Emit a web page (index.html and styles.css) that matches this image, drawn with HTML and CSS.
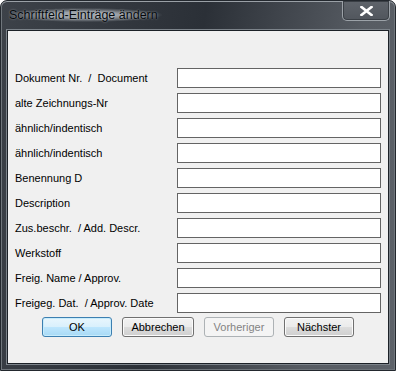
FILE: index.html
```html
<!DOCTYPE html>
<html lang="de">
<head>
  <meta charset="UTF-8" />
  <title>Schriftfeld-Einträge ändern</title>
  <link rel="stylesheet" href="styles.css">
</head>
<body>
  <div class="window">
    <div class="title-bar">
      <span class="title">Schriftfeld-Einträge ändern</span>
      <button class="close-btn" type="button">
        <svg width="13" height="10" viewBox="0 0 13 10">
          <path d="M1.5 1 L11.5 9 M11.5 1 L1.5 9" stroke="#fff" stroke-width="2.6" stroke-linecap="square"/>
        </svg>
      </button>
    </div>

    <!-- CLIENT AREA -->
    <div class="client">
      <form class="fields">
        <label class="field-label">Dokument Nr.  /  Document</label>
        <input type="text" class="field-input">
        <label class="field-label">alte Zeichnungs-Nr</label>
        <input type="text" class="field-input">
        <label class="field-label">ähnlich/indentisch</label>
        <input type="text" class="field-input">
        <label class="field-label">ähnlich/indentisch</label>
        <input type="text" class="field-input">
        <label class="field-label">Benennung D</label>
        <input type="text" class="field-input">
        <label class="field-label">Description</label>
        <input type="text" class="field-input">
        <label class="field-label">Zus.beschr.  / Add. Descr.</label>
        <input type="text" class="field-input">
        <label class="field-label">Werkstoff</label>
        <input type="text" class="field-input">
        <label class="field-label">Freig. Name / Approv.</label>
        <input type="text" class="field-input">
        <label class="field-label">Freigeg. Dat.  / Approv. Date</label>
        <input type="text" class="field-input">
      </form>

      <div class="buttons">
        <button type="button" class="btn btn-default">OK</button>
        <button type="button" class="btn btn-wide">Abbrechen</button>
        <button type="button" class="btn" disabled>Vorheriger</button>
        <button type="button" class="btn">Nächster</button>
      </div>
    </div>
  </div>
</body>
</html>
```

FILE: styles.css
```css
body {
  margin: 0;
  background: #ffffff;
  font-family: "Liberation Sans", Arial, sans-serif;
}

.window {
  width: 396px;
  height: 371px;
  box-sizing: border-box;
  border: 1px solid #23282e;
  border-radius: 7px 7px 0 0;
  background: linear-gradient(100deg, #3d4249 0%, #2b3037 45%, #575c63 80%, #5d6269 100%);
  box-shadow: inset 0 1px 0 #9aa0a6, inset 1px 0 0 #70767c, inset -1px 0 0 #70767c, inset 0 -1px 0 #6d7379;
  display: flex;
  flex-direction: column;
  padding: 0 6px 6px 6px;
}

.title-bar {
  height: 28px;
  display: flex;
  align-items: flex-start;
  justify-content: space-between;
}

.title {
  font-family: "Liberation Sans", Arial, sans-serif;
  font-size: 12.5px;
  color: #05090d;
  margin: 7px 0 0 1px;
  padding: 0 4px 0 1px;
  background: radial-gradient(ellipse at center, rgba(190, 196, 202, 0.75) 30%, rgba(150, 156, 162, 0) 72%);
  text-shadow: 0 0 2px rgba(220, 224, 228, 0.6);
}

.close-btn {
  width: 48px;
  height: 20px;
  margin: 0 -1px 0 0;
  padding: 0;
  border: 1px solid #9ca2a8;
  border-top: none;
  border-radius: 0 0 5px 5px;
  background: linear-gradient(#5f646b, #51565d);
  box-shadow: inset 0 0 0 1px #3a3f45;
  display: flex;
  align-items: center;
  justify-content: center;
}

.client {
  flex: 1;
  background: #f0f0f0;
  border: 1px solid #1c2127;
  box-shadow: 0 0 0 1px #7c838a;
  margin-top: 1px;
  padding: 37px 5px 0 7px;
}

.fields {
  display: grid;
  grid-template-columns: 162px 204px;
  grid-auto-rows: 20px;
  row-gap: 5px;
  margin: 0;
}

.field-label {
  font-size: 11px;
  color: #000;
  white-space: pre;
  align-self: center;
}

.field-input {
  margin: 0;
  border: 1px solid #646464;
  background: #fff;
  box-sizing: border-box;
  height: 20px;
}

.buttons {
  display: flex;
  gap: 10px;
  margin: 4px 0 0 27px;
}

.btn {
  width: 70px;
  height: 20px;
  padding: 0;
  font-family: "Liberation Sans", Arial, sans-serif;
  font-size: 11px;
  color: #000;
  border: 1px solid #707070;
  border-radius: 3px;
  background: linear-gradient(#f2f2f2 0%, #ebebeb 50%, #dddddd 51%, #cfcfcf 100%);
  box-shadow: inset 0 0 0 1px #fbfbfb;
}

.btn-wide {
  width: 72px;
}

.btn-default {
  border-color: #3c7fb1;
  background: linear-gradient(#e9f6fd 0%, #d9f0fc 50%, #bee6fd 51%, #a7d9f5 100%);
  box-shadow: inset 0 0 0 1px #c7ecfc;
}

.btn:disabled {
  color: #838383;
  border-color: #adb2b5;
  background: #f4f4f4;
  box-shadow: none;
}
```
